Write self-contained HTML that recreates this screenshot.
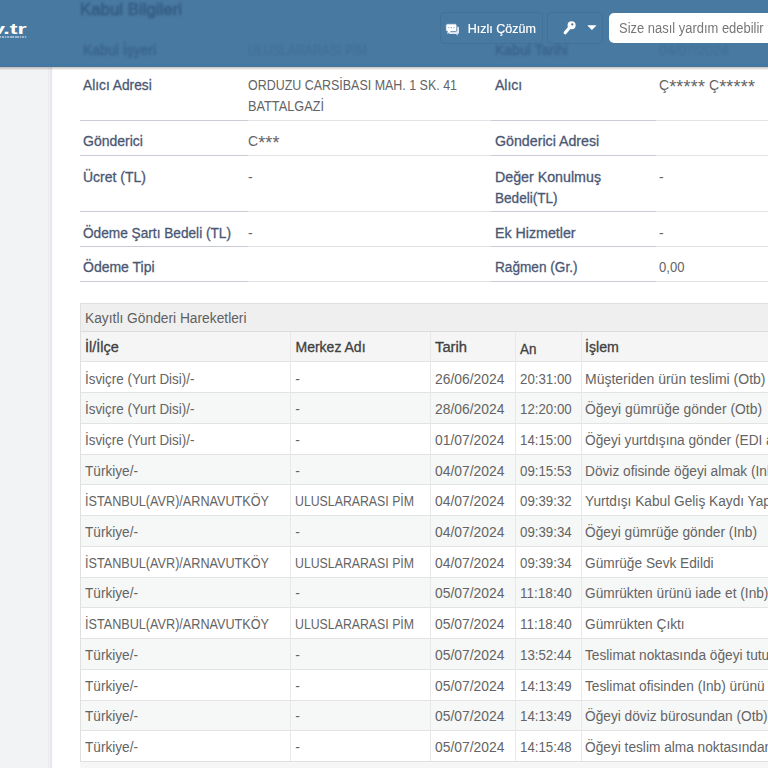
<!DOCTYPE html>
<html><head><meta charset="utf-8"><style>
html,body{margin:0;padding:0;width:768px;height:768px;overflow:hidden;background:#f2f3f5;font-family:"Liberation Sans", sans-serif}
.t{position:absolute;white-space:nowrap;line-height:20px;transform-origin:0 0}
#card{position:absolute;left:48px;top:0;width:720px;height:768px;background:#fff}
#hdr{position:absolute;left:0;top:0;width:768px;height:67px;background:#4879a1;overflow:hidden}
.ast{font-size:18px;vertical-align:-2.7px;letter-spacing:0.2px}
#under .t{color:rgba(20,50,85,0.16) !important;-webkit-text-stroke-color:rgba(20,50,85,0.16) !important}
#under .hd{color:rgba(20,45,80,0.32) !important;-webkit-text-stroke:0.6px rgba(20,45,80,0.32) !important}
#under .lab{color:rgba(20,45,80,0.22) !important;-webkit-text-stroke:0.5px rgba(20,45,80,0.22) !important}
.btn{position:absolute;border:1px solid rgba(30,60,90,0.11);border-radius:4px;box-sizing:border-box}
</style></head><body>
<div id="card">
 <div style="position:absolute;left:0;top:0;width:1px;height:768px;background:#eaebee"></div>
 <div style="position:absolute;left:1px;top:0;width:1px;height:768px;background:#f0f1f3"></div>
 <div style="position:absolute;left:2px;top:0;width:2px;height:768px;background:#e7e8eb"></div>
 <div style="position:absolute;left:4px;top:0;width:1px;height:768px;background:#fcfcfe"></div>
</div>
<div style="position:absolute;left:80px;top:120px;width:168px;height:1px;background:#c9ccd2"></div><div style="position:absolute;left:248px;top:120px;width:243px;height:1px;background:#e0e2e6"></div><div style="position:absolute;left:491px;top:120px;width:165px;height:1px;background:#c9ccd2"></div><div style="position:absolute;left:656px;top:120px;width:112px;height:1px;background:#e0e2e6"></div><div style="position:absolute;left:80px;top:155px;width:168px;height:1px;background:#c9ccd2"></div><div style="position:absolute;left:248px;top:155px;width:243px;height:1px;background:#e0e2e6"></div><div style="position:absolute;left:491px;top:155px;width:165px;height:1px;background:#c9ccd2"></div><div style="position:absolute;left:656px;top:155px;width:112px;height:1px;background:#e0e2e6"></div><div style="position:absolute;left:80px;top:211px;width:168px;height:1px;background:#c9ccd2"></div><div style="position:absolute;left:248px;top:211px;width:243px;height:1px;background:#e0e2e6"></div><div style="position:absolute;left:491px;top:211px;width:165px;height:1px;background:#c9ccd2"></div><div style="position:absolute;left:656px;top:211px;width:112px;height:1px;background:#e0e2e6"></div><div style="position:absolute;left:80px;top:246px;width:168px;height:1px;background:#c9ccd2"></div><div style="position:absolute;left:248px;top:246px;width:243px;height:1px;background:#e0e2e6"></div><div style="position:absolute;left:491px;top:246px;width:165px;height:1px;background:#c9ccd2"></div><div style="position:absolute;left:656px;top:246px;width:112px;height:1px;background:#e0e2e6"></div><div style="position:absolute;left:80px;top:281px;width:168px;height:1px;background:#c9ccd2"></div><div style="position:absolute;left:248px;top:281px;width:243px;height:1px;background:#e0e2e6"></div><div style="position:absolute;left:491px;top:281px;width:165px;height:1px;background:#c9ccd2"></div><div style="position:absolute;left:656px;top:281px;width:112px;height:1px;background:#e0e2e6"></div>
<div style="position:absolute;left:80px;top:303px;width:700px;height:457px;border:1px solid #e0e0e0;background:#fff"></div><div style="position:absolute;left:81px;top:304px;width:700px;height:27px;background:#efefef;border-bottom:1px solid #dcdcdc"></div><div style="position:absolute;left:81px;top:332px;width:700px;height:29px;background:#f5f5f5"></div><div style="position:absolute;left:81px;top:361.25px;width:700px;height:30.75px;background:#fff;border-top:1px solid #e3e3e3;box-sizing:border-box"></div><div style="position:absolute;left:81px;top:392.00px;width:700px;height:30.75px;background:#f6f7f7;border-top:1px solid #e3e3e3;box-sizing:border-box"></div><div style="position:absolute;left:81px;top:422.75px;width:700px;height:30.75px;background:#fff;border-top:1px solid #e3e3e3;box-sizing:border-box"></div><div style="position:absolute;left:81px;top:453.50px;width:700px;height:30.75px;background:#f6f7f7;border-top:1px solid #e3e3e3;box-sizing:border-box"></div><div style="position:absolute;left:81px;top:484.25px;width:700px;height:30.75px;background:#fff;border-top:1px solid #e3e3e3;box-sizing:border-box"></div><div style="position:absolute;left:81px;top:515.00px;width:700px;height:30.75px;background:#f6f7f7;border-top:1px solid #e3e3e3;box-sizing:border-box"></div><div style="position:absolute;left:81px;top:545.75px;width:700px;height:30.75px;background:#fff;border-top:1px solid #e3e3e3;box-sizing:border-box"></div><div style="position:absolute;left:81px;top:576.50px;width:700px;height:30.75px;background:#f6f7f7;border-top:1px solid #e3e3e3;box-sizing:border-box"></div><div style="position:absolute;left:81px;top:607.25px;width:700px;height:30.75px;background:#fff;border-top:1px solid #e3e3e3;box-sizing:border-box"></div><div style="position:absolute;left:81px;top:638.00px;width:700px;height:30.75px;background:#f6f7f7;border-top:1px solid #e3e3e3;box-sizing:border-box"></div><div style="position:absolute;left:81px;top:668.75px;width:700px;height:30.75px;background:#fff;border-top:1px solid #e3e3e3;box-sizing:border-box"></div><div style="position:absolute;left:81px;top:699.50px;width:700px;height:30.75px;background:#f6f7f7;border-top:1px solid #e3e3e3;box-sizing:border-box"></div><div style="position:absolute;left:81px;top:730.25px;width:700px;height:30.75px;background:#fff;border-top:1px solid #e3e3e3;box-sizing:border-box"></div><div style="position:absolute;left:80px;top:762px;width:700px;height:6px;background:#f6f6f6"></div><div style="position:absolute;left:290px;top:332px;width:1px;height:429.00px;background:#e8e8e8"></div><div style="position:absolute;left:430px;top:332px;width:1px;height:429.00px;background:#e8e8e8"></div><div style="position:absolute;left:515px;top:332px;width:1px;height:429.00px;background:#e8e8e8"></div><div style="position:absolute;left:581px;top:332px;width:1px;height:429.00px;background:#e8e8e8"></div>
<div class="t lab" style="left:83.00px;top:75.15px;font-size:14px;font-weight:400;color:#4a5874;transform:scaleX(0.9816);-webkit-text-stroke:0.3px #4a5874;">Alıcı Adresi</div><div class="t" style="left:248.00px;top:75.15px;font-size:14px;font-weight:400;color:#646464;transform:scaleX(0.8896);">ORDUZU CARSİBASI MAH. 1 SK. 41</div><div class="t" style="left:248.00px;top:96.15px;font-size:14px;font-weight:400;color:#646464;transform:scaleX(0.9102);">BATTALGAZİ</div><div class="t lab" style="left:495.00px;top:75.15px;font-size:14px;font-weight:400;color:#4a5874;-webkit-text-stroke:0.3px #4a5874;">Alıcı</div><div class="t" style="left:659.00px;top:75.15px;font-size:14px;font-weight:400;color:#646464;">Ç<span class="ast">*****</span> Ç<span class="ast">*****</span></div><div class="t lab" style="left:83.00px;top:130.75px;font-size:14px;font-weight:400;color:#4a5874;-webkit-text-stroke:0.3px #4a5874;">Gönderici</div><div class="t" style="left:248.00px;top:130.75px;font-size:14px;font-weight:400;color:#646464;">C<span class="ast">***</span></div><div class="t lab" style="left:495.00px;top:130.75px;font-size:14px;font-weight:400;color:#4a5874;transform:scaleX(1.0146);-webkit-text-stroke:0.3px #4a5874;">Gönderici Adresi</div><div class="t lab" style="left:83.00px;top:167.15px;font-size:14px;font-weight:400;color:#4a5874;-webkit-text-stroke:0.3px #4a5874;">Ücret (TL)</div><div class="t" style="left:248.00px;top:167.15px;font-size:14px;font-weight:400;color:#646464;">-</div><div class="t lab" style="left:495.00px;top:167.15px;font-size:14px;font-weight:400;color:#4a5874;transform:scaleX(1.0165);-webkit-text-stroke:0.3px #4a5874;">Değer Konulmuş</div><div class="t lab" style="left:495.00px;top:188.15px;font-size:14px;font-weight:400;color:#4a5874;transform:scaleX(0.9694);-webkit-text-stroke:0.3px #4a5874;">Bedeli(TL)</div><div class="t" style="left:659.00px;top:167.15px;font-size:14px;font-weight:400;color:#646464;">-</div><div class="t lab" style="left:83.00px;top:222.65px;font-size:14px;font-weight:400;color:#4a5874;transform:scaleX(0.9755);-webkit-text-stroke:0.3px #4a5874;">Ödeme Şartı Bedeli (TL)</div><div class="t" style="left:248.00px;top:222.65px;font-size:14px;font-weight:400;color:#646464;">-</div><div class="t lab" style="left:495.00px;top:222.65px;font-size:14px;font-weight:400;color:#4a5874;transform:scaleX(1.0158);-webkit-text-stroke:0.3px #4a5874;">Ek Hizmetler</div><div class="t" style="left:659.00px;top:222.65px;font-size:14px;font-weight:400;color:#646464;">-</div><div class="t lab" style="left:83.00px;top:257.15px;font-size:14px;font-weight:400;color:#4a5874;-webkit-text-stroke:0.3px #4a5874;">Ödeme Tipi</div><div class="t lab" style="left:495.00px;top:257.15px;font-size:14px;font-weight:400;color:#4a5874;transform:scaleX(0.9729);-webkit-text-stroke:0.3px #4a5874;">Rağmen (Gr.)</div><div class="t" style="left:659.00px;top:257.15px;font-size:14px;font-weight:400;color:#646464;transform:scaleX(0.9322);">0,00</div><div class="t" style="left:85.00px;top:308.05px;font-size:14px;font-weight:400;color:#606060;transform:scaleX(0.9837);">Kayıtlı Gönderi Hareketleri</div><div class="t" style="left:85.00px;top:336.75px;font-size:14px;font-weight:400;color:#404040;transform:scaleX(1.0313);-webkit-text-stroke:0.3px #404040;">İl/İlçe</div><div class="t" style="left:295.50px;top:336.75px;font-size:14px;font-weight:400;color:#404040;-webkit-text-stroke:0.3px #404040;">Merkez Adı</div><div class="t" style="left:434.50px;top:336.75px;font-size:14px;font-weight:400;color:#404040;transform:scaleX(1.0545);-webkit-text-stroke:0.3px #404040;">Tarih</div><div class="t" style="left:519.60px;top:338.75px;font-size:14px;font-weight:400;color:#404040;transform:scaleX(0.9577);-webkit-text-stroke:0.3px #404040;">An</div><div class="t" style="left:585.00px;top:336.75px;font-size:14px;font-weight:400;color:#404040;transform:scaleX(1.0105);-webkit-text-stroke:0.3px #404040;">İşlem</div><div class="t" style="left:85.30px;top:368.50px;font-size:14px;font-weight:400;color:#646464;transform:scaleX(0.9568);">İsviçre (Yurt Disi)/-</div><div class="t" style="left:295.30px;top:368.50px;font-size:14px;font-weight:400;color:#646464;">-</div><div class="t" style="left:434.60px;top:368.50px;font-size:14px;font-weight:400;color:#646464;transform:scaleX(0.9905);">26/06/2024</div><div class="t" style="left:520.00px;top:368.50px;font-size:14px;font-weight:400;color:#646464;transform:scaleX(0.9487);">20:31:00</div><div class="t" style="left:585.00px;top:368.50px;font-size:14px;font-weight:400;color:#646464;">Müşteriden ürün teslimi (Otb)</div><div class="t" style="left:85.30px;top:399.21px;font-size:14px;font-weight:400;color:#646464;transform:scaleX(0.9568);">İsviçre (Yurt Disi)/-</div><div class="t" style="left:295.30px;top:399.21px;font-size:14px;font-weight:400;color:#646464;">-</div><div class="t" style="left:434.60px;top:399.21px;font-size:14px;font-weight:400;color:#646464;transform:scaleX(0.9905);">28/06/2024</div><div class="t" style="left:520.00px;top:399.21px;font-size:14px;font-weight:400;color:#646464;transform:scaleX(0.9487);">12:20:00</div><div class="t" style="left:585.00px;top:399.21px;font-size:14px;font-weight:400;color:#646464;transform:scaleX(0.9889);">Öğeyi gümrüğe gönder (Otb)</div><div class="t" style="left:85.30px;top:429.92px;font-size:14px;font-weight:400;color:#646464;transform:scaleX(0.9568);">İsviçre (Yurt Disi)/-</div><div class="t" style="left:295.30px;top:429.92px;font-size:14px;font-weight:400;color:#646464;">-</div><div class="t" style="left:434.60px;top:429.92px;font-size:14px;font-weight:400;color:#646464;transform:scaleX(0.9905);">01/07/2024</div><div class="t" style="left:520.00px;top:429.92px;font-size:14px;font-weight:400;color:#646464;transform:scaleX(0.9487);">14:15:00</div><div class="t" style="left:585.00px;top:429.92px;font-size:14px;font-weight:400;color:#646464;transform:scaleX(0.978);">Öğeyi yurtdışına gönder (EDI alındı)</div><div class="t" style="left:85.30px;top:460.63px;font-size:14px;font-weight:400;color:#646464;transform:scaleX(0.9734);">Türkiye/-</div><div class="t" style="left:295.30px;top:460.63px;font-size:14px;font-weight:400;color:#646464;">-</div><div class="t" style="left:434.60px;top:460.63px;font-size:14px;font-weight:400;color:#646464;transform:scaleX(0.9905);">04/07/2024</div><div class="t" style="left:520.00px;top:460.63px;font-size:14px;font-weight:400;color:#646464;transform:scaleX(0.9487);">09:15:53</div><div class="t" style="left:585.00px;top:460.63px;font-size:14px;font-weight:400;color:#646464;transform:scaleX(0.978);">Döviz ofisinde öğeyi almak (Inb)</div><div class="t" style="left:85.30px;top:491.34px;font-size:14px;font-weight:400;color:#646464;transform:scaleX(0.9028);">İSTANBUL(AVR)/ARNAVUTKÖY</div><div class="t" style="left:295.30px;top:491.34px;font-size:14px;font-weight:400;color:#646464;transform:scaleX(0.8791);">ULUSLARARASI PİM</div><div class="t" style="left:434.60px;top:491.34px;font-size:14px;font-weight:400;color:#646464;transform:scaleX(0.9905);">04/07/2024</div><div class="t" style="left:520.00px;top:491.34px;font-size:14px;font-weight:400;color:#646464;transform:scaleX(0.9487);">09:39:32</div><div class="t" style="left:585.00px;top:491.34px;font-size:14px;font-weight:400;color:#646464;transform:scaleX(0.978);">Yurtdışı Kabul Geliş Kaydı Yapıldı</div><div class="t" style="left:85.30px;top:522.05px;font-size:14px;font-weight:400;color:#646464;transform:scaleX(0.9734);">Türkiye/-</div><div class="t" style="left:295.30px;top:522.05px;font-size:14px;font-weight:400;color:#646464;">-</div><div class="t" style="left:434.60px;top:522.05px;font-size:14px;font-weight:400;color:#646464;transform:scaleX(0.9905);">04/07/2024</div><div class="t" style="left:520.00px;top:522.05px;font-size:14px;font-weight:400;color:#646464;transform:scaleX(0.9487);">09:39:34</div><div class="t" style="left:585.00px;top:522.05px;font-size:14px;font-weight:400;color:#646464;transform:scaleX(0.978);">Öğeyi gümrüğe gönder (Inb)</div><div class="t" style="left:85.30px;top:552.76px;font-size:14px;font-weight:400;color:#646464;transform:scaleX(0.9028);">İSTANBUL(AVR)/ARNAVUTKÖY</div><div class="t" style="left:295.30px;top:552.76px;font-size:14px;font-weight:400;color:#646464;transform:scaleX(0.8791);">ULUSLARARASI PİM</div><div class="t" style="left:434.60px;top:552.76px;font-size:14px;font-weight:400;color:#646464;transform:scaleX(0.9905);">04/07/2024</div><div class="t" style="left:520.00px;top:552.76px;font-size:14px;font-weight:400;color:#646464;transform:scaleX(0.9487);">09:39:34</div><div class="t" style="left:585.00px;top:552.76px;font-size:14px;font-weight:400;color:#646464;transform:scaleX(0.978);">Gümrüğe Sevk Edildi</div><div class="t" style="left:85.30px;top:583.47px;font-size:14px;font-weight:400;color:#646464;transform:scaleX(0.9734);">Türkiye/-</div><div class="t" style="left:295.30px;top:583.47px;font-size:14px;font-weight:400;color:#646464;">-</div><div class="t" style="left:434.60px;top:583.47px;font-size:14px;font-weight:400;color:#646464;transform:scaleX(0.9905);">05/07/2024</div><div class="t" style="left:520.00px;top:583.47px;font-size:14px;font-weight:400;color:#646464;transform:scaleX(0.9671);">11:18:40</div><div class="t" style="left:585.00px;top:583.47px;font-size:14px;font-weight:400;color:#646464;transform:scaleX(0.978);">Gümrükten ürünü iade et (Inb)</div><div class="t" style="left:85.30px;top:614.18px;font-size:14px;font-weight:400;color:#646464;transform:scaleX(0.9028);">İSTANBUL(AVR)/ARNAVUTKÖY</div><div class="t" style="left:295.30px;top:614.18px;font-size:14px;font-weight:400;color:#646464;transform:scaleX(0.8791);">ULUSLARARASI PİM</div><div class="t" style="left:434.60px;top:614.18px;font-size:14px;font-weight:400;color:#646464;transform:scaleX(0.9905);">05/07/2024</div><div class="t" style="left:520.00px;top:614.18px;font-size:14px;font-weight:400;color:#646464;transform:scaleX(0.9671);">11:18:40</div><div class="t" style="left:585.00px;top:614.18px;font-size:14px;font-weight:400;color:#646464;transform:scaleX(0.978);">Gümrükten Çıktı</div><div class="t" style="left:85.30px;top:644.89px;font-size:14px;font-weight:400;color:#646464;transform:scaleX(0.9734);">Türkiye/-</div><div class="t" style="left:295.30px;top:644.89px;font-size:14px;font-weight:400;color:#646464;">-</div><div class="t" style="left:434.60px;top:644.89px;font-size:14px;font-weight:400;color:#646464;transform:scaleX(0.9905);">05/07/2024</div><div class="t" style="left:520.00px;top:644.89px;font-size:14px;font-weight:400;color:#646464;transform:scaleX(0.9487);">13:52:44</div><div class="t" style="left:585.00px;top:644.89px;font-size:14px;font-weight:400;color:#646464;transform:scaleX(0.978);">Teslimat noktasında öğeyi tutun (Inb)</div><div class="t" style="left:85.30px;top:675.60px;font-size:14px;font-weight:400;color:#646464;transform:scaleX(0.9734);">Türkiye/-</div><div class="t" style="left:295.30px;top:675.60px;font-size:14px;font-weight:400;color:#646464;">-</div><div class="t" style="left:434.60px;top:675.60px;font-size:14px;font-weight:400;color:#646464;transform:scaleX(0.9905);">05/07/2024</div><div class="t" style="left:520.00px;top:675.60px;font-size:14px;font-weight:400;color:#646464;transform:scaleX(0.9487);">14:13:49</div><div class="t" style="left:585.00px;top:675.60px;font-size:14px;font-weight:400;color:#646464;transform:scaleX(0.978);">Teslimat ofisinden (Inb) ürünü teslim al</div><div class="t" style="left:85.30px;top:706.31px;font-size:14px;font-weight:400;color:#646464;transform:scaleX(0.9734);">Türkiye/-</div><div class="t" style="left:295.30px;top:706.31px;font-size:14px;font-weight:400;color:#646464;">-</div><div class="t" style="left:434.60px;top:706.31px;font-size:14px;font-weight:400;color:#646464;transform:scaleX(0.9905);">05/07/2024</div><div class="t" style="left:520.00px;top:706.31px;font-size:14px;font-weight:400;color:#646464;transform:scaleX(0.9487);">14:13:49</div><div class="t" style="left:585.00px;top:706.31px;font-size:14px;font-weight:400;color:#646464;transform:scaleX(0.978);">Öğeyi döviz bürosundan (Otb) teslim al</div><div class="t" style="left:85.30px;top:737.02px;font-size:14px;font-weight:400;color:#646464;transform:scaleX(0.9734);">Türkiye/-</div><div class="t" style="left:295.30px;top:737.02px;font-size:14px;font-weight:400;color:#646464;">-</div><div class="t" style="left:434.60px;top:737.02px;font-size:14px;font-weight:400;color:#646464;transform:scaleX(0.9905);">05/07/2024</div><div class="t" style="left:520.00px;top:737.02px;font-size:14px;font-weight:400;color:#646464;transform:scaleX(0.9487);">14:15:48</div><div class="t" style="left:585.00px;top:737.02px;font-size:14px;font-weight:400;color:#646464;transform:scaleX(0.978);">Öğeyi teslim alma noktasından teslim</div>
<div style="position:absolute;left:0;top:67px;width:768px;height:1px;background:rgba(40,50,60,0.24)"></div>
<div style="position:absolute;left:0;top:68px;width:768px;height:1px;background:rgba(60,60,40,0.18)"></div>
<div style="position:absolute;left:0;top:69px;width:768px;height:1px;background:rgba(0,0,0,0.06)"></div>
<div id="hdr">
 <div id="under" style="filter:blur(0.9px)"><div class="t hd" style="left:80.00px;top:0.11px;font-size:17px;font-weight:400;color:#222;transform:scaleX(0.9903);-webkit-text-stroke:0.6px;">Kabul Bilgileri</div><div class="t lab" style="left:83.00px;top:40.15px;font-size:14px;font-weight:400;color:#4a5874;-webkit-text-stroke:0.3px #4a5874;">Kabul İşyeri</div><div class="t" style="left:248.00px;top:40.15px;font-size:14px;font-weight:400;color:#646464;transform:scaleX(0.8791);">ULUSLARARASI PİM</div><div class="t lab" style="left:495.00px;top:40.15px;font-size:14px;font-weight:400;color:#4a5874;-webkit-text-stroke:0.3px #4a5874;">Kabul Tarihi</div><div class="t" style="left:659.00px;top:40.15px;font-size:14px;font-weight:400;color:#646464;transform:scaleX(0.9905);">04/07/2024</div></div>
 <div style="position:absolute;left:0;top:64px;width:768px;height:2px;background:#4079a8"></div>
 <div style="position:absolute;left:0;top:66px;width:768px;height:1px;background:#52718b"></div>
 <div class="t" style="left:-8px;top:19.2px;font-size:15px;font-weight:700;color:#fff;transform:scaleX(1.56)">v.tr</div>
 <div style="position:absolute;left:0;top:35.5px;width:27px;height:2px;background:repeating-linear-gradient(90deg,rgba(235,242,250,0.5) 0 1.5px,rgba(235,242,250,0.12) 1.5px 2.5px)"></div>
 <div class="btn" style="left:440px;top:12px;width:103px;height:32px"></div>
 <div class="btn" style="left:547px;top:12px;width:56px;height:32px"></div>
 <svg style="position:absolute;left:0;top:0" width="768" height="66">
  <rect x="448.5" y="26.5" width="10.5" height="7.5" rx="1.5" fill="#dfeaf5"/>
  <path d="M455 33 L458 36 L457 33 Z" fill="#dfeaf5"/>
  <rect x="445.8" y="23.8" width="11" height="7.8" rx="1.5" fill="#fff" stroke="#4879a1" stroke-width="0.8"/>
  <path d="M448 31 L447 34 L451 31 Z" fill="#fff"/>
  <circle cx="448.8" cy="27.6" r="0.7" fill="#8aa7c2"/><circle cx="451.3" cy="27.6" r="0.7" fill="#8aa7c2"/><circle cx="453.8" cy="27.6" r="0.7" fill="#8aa7c2"/>
  <circle cx="571.6" cy="25.2" r="4" fill="#fff"/>
  <circle cx="572.3" cy="24.4" r="1.15" fill="#4879a1"/>
  <path d="M569.8 27.2 L565.2 32.8" stroke="#fff" stroke-width="3.2" stroke-linecap="round"/>
  <path d="M587.8 25.6 L596 25.6 L591.9 29.8 Z" fill="#fff" stroke="#fff" stroke-width="0.6" stroke-linejoin="round"/>
 </svg>
 <div class="t" style="left:467.8px;top:18.5px;font-size:12.5px;color:#fff;-webkit-text-stroke:0.2px #fff">Hızlı Çözüm</div>
 <div style="position:absolute;left:609px;top:12.7px;width:170px;height:30px;background:#fff;border-radius:5px"></div>
 <div class="t" style="left:619.3px;top:18px;font-size:14px;color:#777;transform:scaleX(0.925)">Size nasıl yardım edebilir</div>
</div>
</body></html>
